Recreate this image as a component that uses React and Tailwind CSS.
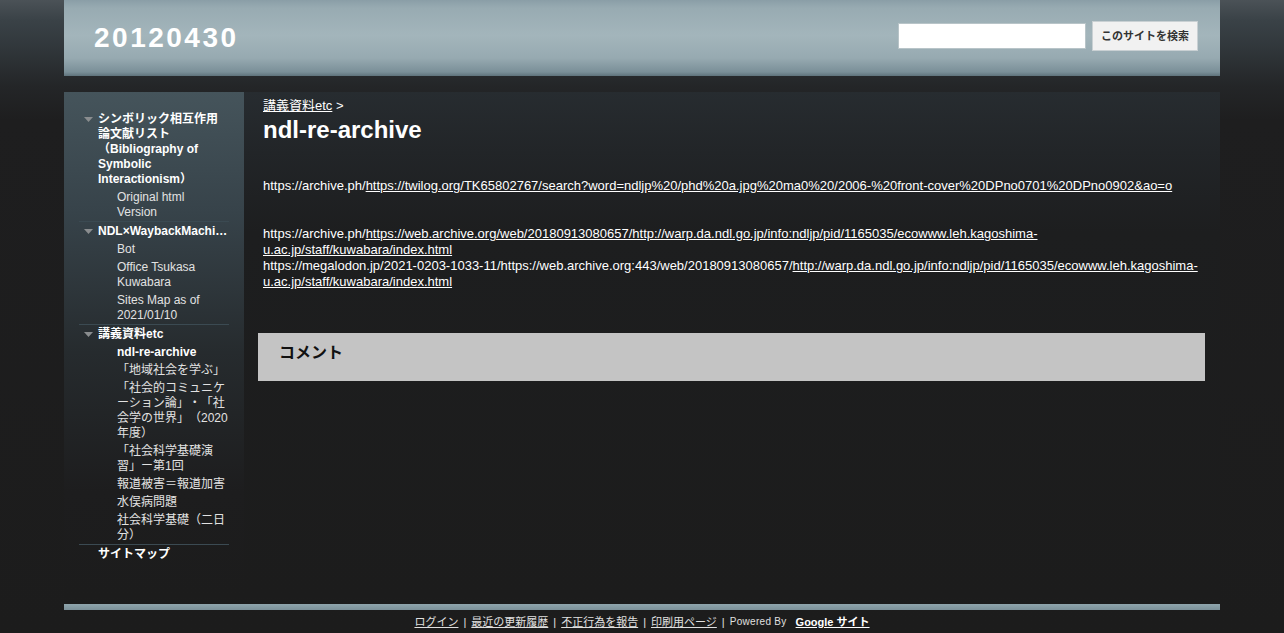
import React from "react";

const Tri = () => (
  <svg width="9" height="6" viewBox="0 0 9 6" className="shrink-0 mt-[5px]">
    <polygon points="0,0 9,0 4.5,5" fill="#8a8d8f" />
  </svg>
);

const Lines = ({ lines }) =>
  lines.map((l, i) => (
    <div key={i} className="whitespace-nowrap">
      {l}
    </div>
  ));

function Group({ title, items, first, truncate, noTri }) {
  return (
    <div className={`flex flex-col gap-[3px] pt-[2px] pb-[1px] ${first ? "" : "border-t border-[#3b4a52]"}`}>
      <div className="flex items-start pl-[5px]">
        {noTri ? <span className="w-[9px] shrink-0" /> : <Tri />}
        <div
          className={`ml-[5px] min-w-0 font-bold text-white ${truncate ? "whitespace-nowrap overflow-hidden text-ellipsis" : ""}`}
        >
          {truncate ? title : <Lines lines={title} />}
        </div>
      </div>
      {items.map((it, i) => (
        <div
          key={i}
          className={`pl-[38px] ${it.current ? "font-bold text-white" : "text-[#e2e2e2]"}`}
        >
          <Lines lines={it.t} />
        </div>
      ))}
    </div>
  );
}

export default function App() {
  return (
    <div className="min-h-screen w-full [text-spacing-trim:space-all] bg-[linear-gradient(180deg,#4b5257_0px,#3a4247_20px,#30363a_50px,#242628_85px,#1e1e1f_120px,#1c1c1c_100%)] font-['Liberation_Sans','Noto_Sans_CJK_JP',sans-serif] text-white">
      <div className="mx-auto w-[1156px]">
        {/* header */}
        <div className="h-[76px] flex items-start justify-between pl-[30px] pr-[22px] bg-[linear-gradient(180deg,#8a9ea7_0px,#98abb2_8px,#a3b5bb_35px,#97aab1_58px,#7a8f98_72px,#5f737c_76px)]">
          <div className="mt-[24px] text-[28px] font-bold tracking-[2.5px] text-white leading-[28px]">20120430</div>
          <div className="mt-[21px] flex items-center gap-[6px]">
            <div className="w-[188px] h-[26px] bg-white border border-[#b8c4c8]" />
            <button className="h-[30px] w-[106px] bg-[#f1f1f1] border border-[#c9d0d3] text-[11px] font-bold text-[#333] leading-none">
              このサイトを検索
            </button>
          </div>
        </div>

        {/* main */}
        <div className="mt-[16px] flex h-[505px]">
          <div className="w-[180px] shrink-0 px-[15px] pt-[18px] text-[12px] leading-[15px] bg-[linear-gradient(180deg,#45545b_0px,#37434a_120px,#262b2e_260px,#1d1d1e_400px,#1c1c1c_100%)]">
            <Group
              first
              title={["シンボリック相互作用", "論文献リスト", "（Bibliography of", "Symbolic", "Interactionism）"]}
              items={[{ t: ["Original html", "Version"] }]}
            />
            <Group
              truncate
              title="NDL×WaybackMachine"
              items={[
                { t: ["Bot"] },
                { t: ["Office Tsukasa", "Kuwabara"] },
                { t: ["Sites Map as of", "2021/01/10"] },
              ]}
            />
            <Group
              title={["講義資料etc"]}
              items={[
                { t: ["ndl-re-archive"], current: true },
                { t: ["「地域社会を学ぶ」"] },
                { t: ["「社会的コミュニケ", "ーション論」・「社", "会学の世界」（2020", "年度）"] },
                { t: ["「社会科学基礎演", "習」ー第1回"] },
                { t: ["報道被害＝報道加害"] },
                { t: ["水俣病問題"] },
                { t: ["社会科学基礎（二日", "分）"] },
              ]}
            />
            <Group noTri title={["サイトマップ"]} items={[]} />
          </div>

          <div className="flex-1 pl-[14px] pr-[15px] pt-[6px] bg-[linear-gradient(180deg,#272c30_0px,#222528_60px,#1d1e1f_140px,#1c1c1c_100%)]">
            <div className="px-[5px]">
              <div className="text-[13px] leading-[16px] text-white">
                <span className="underline">講義資料etc</span> &gt;
              </div>
              <h1 className="text-[24px] font-bold leading-[28px] mt-[2px]">ndl-re-archive</h1>
              <div className="mt-[34px] text-[13px] leading-[16px] text-white break-words">
                <div>
                  https://archive.ph/
                  <span className="underline">
                    https://twilog.org/TK65802767/search?word=ndljp%20/phd%20a.jpg%20ma0%20/2006-%20front-cover%20DPno0701%20DPno0902&amp;ao=o
                  </span>
                </div>
                <div className="h-[32px]" />
                <div>
                  https://archive.ph/
                  <span className="underline">
                    https://web.archive.org/web/20180913080657/http://warp.da.ndl.go.jp/info:ndljp/pid/1165035/ecowww.leh.kagoshima-u.ac.jp/staff/kuwabara/index.html
                  </span>
                </div>
                <div>
                  https://megalodon.jp/2021-0203-1033-11/https://web.archive.org:443/web/20180913080657/
                  <span className="underline">
                    http://warp.da.ndl.go.jp/info:ndljp/pid/1165035/ecowww.leh.kagoshima-u.ac.jp/staff/kuwabara/index.html
                  </span>
                </div>
              </div>
            </div>
            <div className="mt-[43px] h-[48px] bg-[#c4c4c4] flex items-start pt-[10px] pl-[21px]">
              <span className="text-[16px] leading-[20px] font-bold text-[#111]">コメント</span>
            </div>
          </div>
        </div>

        {/* footer */}
        <div className="mt-[7px] h-[6px] bg-[linear-gradient(180deg,#8fa5ad_0px,#7b9099_100%)]" />
        <div className="pt-[5px] pb-[4px] flex justify-center items-center text-[11px] leading-[14px] text-[#e0e0e0]">
          <span className="underline">ログイン</span>
          <span className="mx-[5px]">|</span>
          <span className="underline">最近の更新履歴</span>
          <span className="mx-[5px]">|</span>
          <span className="underline">不正行為を報告</span>
          <span className="mx-[5px]">|</span>
          <span className="underline">印刷用ページ</span>
          <span className="mx-[5px]">|</span>
          <span className="text-[10px] tracking-[0.3px]">Powered By</span>
          <span className="ml-[9px] font-bold underline text-white">Google サイト</span>
        </div>
      </div>
    </div>
  );
}
